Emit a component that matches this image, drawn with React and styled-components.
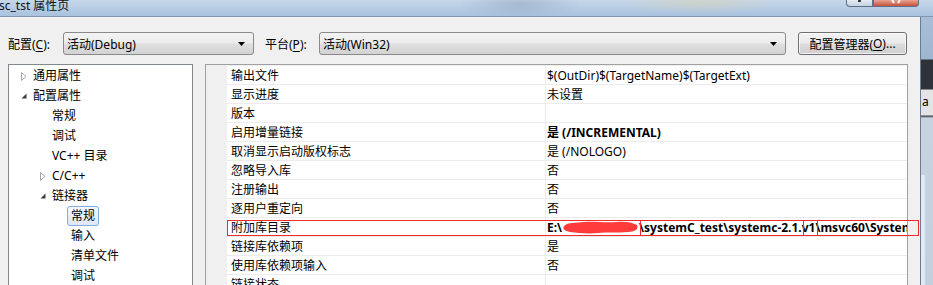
import styled, { createGlobalStyle } from 'styled-components';

const GlobalStyle = createGlobalStyle`
  html, body { margin: 0; padding: 0; background: #f0f0f0; overflow: hidden; }
  body {
    font-family: "Noto Sans", "Noto Sans CJK SC", sans-serif;
    font-size: 12px;
    color: #000;
  }
`;

const Window = styled.div`
  width: 933px;
  height: 285px;
  display: flex;
  flex-direction: column;
  overflow: hidden;
`;

const TitleBar = styled.div`
  height: 16px;
  flex: none;
  display: flex;
  align-items: flex-start;
  border-bottom: 1px solid #8196b0;
  background:
    radial-gradient(ellipse 60px 14px at 520px 4px, rgba(120, 140, 170, 0.35), transparent),
    radial-gradient(ellipse 80px 12px at 700px 2px, rgba(230, 210, 150, 0.35), transparent),
    linear-gradient(to bottom, #c6d7ea, #a9c2de);
`;

const TitleText = styled.div`
  margin-left: -1px;
  line-height: 12px;
  font-size: 12px;
  color: #111;
`;

const Controls = styled.div`
  margin-left: auto;
  margin-right: 14px;
  display: flex;
  height: 7px;
`;

const CtrlButton = styled.div`
  width: ${p => p.$w}px;
  height: 7px;
  box-sizing: border-box;
  border: 1px solid #5f708a;
  border-top: none;
  border-radius: ${p => (p.$close ? '0 0 4px 0' : '0 0 0 4px')};
  background: ${p =>
    p.$close
      ? 'linear-gradient(#e8a493, #c7513a)'
      : 'linear-gradient(#e6edf5, #c4d2e2)'};
  display: flex;
  justify-content: center;
`;

const Main = styled.div`
  flex: 1;
  min-height: 0;
  display: flex;
`;

const Dialog = styled.div`
  width: 921px;
  flex: none;
  box-sizing: border-box;
  padding: 15px 12px 0 8px;
  background: #f0f0f0;
  border-right: 1px solid #6c7b8e;
  display: flex;
  flex-direction: column;
`;

const BackStrip = styled.div`
  flex: 1;
  position: relative;
  background: linear-gradient(
    to bottom,
    #a9bfd8 0px,
    #9fb6d1 42px,
    #2f3339 43px,
    #2f3339 72px,
    #e4e4e4 73px,
    #e4e4e4 98px,
    #3a3f46 99px,
    #c7d3e1 101px,
    #c3cfdd 100%
  );
`;

const StripText = styled.span`
  position: absolute;
  top: 78px;
  left: 1px;
  font-size: 12px;
  line-height: 14px;
`;

const StripBar = styled.div`
  position: absolute;
  top: 158px;
  bottom: 0;
  left: 0;
  width: 4px;
  background: #dfeaf7;
`;

const Toolbar = styled.div`
  display: flex;
  align-items: center;
  height: 23px;
  flex: none;
`;

const Label = styled.span`
  width: ${p => p.$w}px;
  margin-left: ${p => p.$ml || 0}px;
  flex: none;
  white-space: nowrap;
`;

const Key = styled.span`
  text-decoration: underline;
  text-underline-offset: 2px;
`;

const Combo = styled.div`
  width: ${p => p.$w}px;
  height: 23px;
  flex: none;
  box-sizing: border-box;
  border: 1px solid #8a8a8a;
  border-radius: 3px;
  background: linear-gradient(#f3f3f3 0%, #ececec 48%, #dfdfdf 52%, #d3d3d3 100%);
  display: flex;
  align-items: center;
  justify-content: space-between;
  padding: 0 8px 0 3px;
  white-space: nowrap;
`;

const PushButton = styled.div`
  width: 109px;
  height: 23px;
  margin-left: 12px;
  flex: none;
  box-sizing: border-box;
  border: 1px solid #707070;
  border-radius: 3px;
  background: linear-gradient(#f2f2f2 0%, #ebebeb 48%, #dddddd 52%, #cfcfcf 100%);
  box-shadow: inset 0 0 0 1px rgba(255, 255, 255, 0.7);
  display: flex;
  align-items: center;
  justify-content: center;
  white-space: nowrap;
`;

const Panels = styled.div`
  flex: 1;
  min-height: 0;
  margin-top: 9px;
  display: flex;
  gap: 12px;
`;

const Tree = styled.div`
  width: 185px;
  flex: none;
  box-sizing: border-box;
  border: 1px solid #828790;
  border-bottom: none;
  padding-top: 1px;
  background: #fff;
  overflow: hidden;
`;

const TreeRow = styled.div`
  height: 20px;
  display: flex;
  align-items: center;
  padding-left: ${p => 12 + p.$level * 19}px;
  white-space: nowrap;
`;

const ArrowSlot = styled.span`
  width: 12px;
  flex: none;
  display: flex;
  align-items: center;
`;

const TreeLabel = styled.span`
  line-height: 18px;
  ${p =>
    p.$selected &&
    `
    margin-left: -4px;
    padding: 0 3px;
    border: 1px solid #84acdd;
    border-radius: 3px;
    background: linear-gradient(#f3f8fd, #dbe8f7);
  `}
`;

const Grid = styled.div`
  flex: 1;
  position: relative;
  box-sizing: border-box;
  border: 1px solid #a0a0a0;
  border-bottom: none;
  padding-top: 1px;
  background: #f0f0f0;
`;

const GridRow = styled.div`
  display: grid;
  grid-template-columns: 21px 319px 1fr;
  height: 19px;
`;

const Cell = styled.div`
  background: #fff;
  border-bottom: 1px solid #ececec;
  border-right: ${p => (p.$name ? '1px solid #ececec' : 'none')};
  padding-left: ${p => (p.$name ? 4 : 1)}px;
  height: 18px;
  line-height: 19px;
  white-space: nowrap;
  overflow: hidden;
  font-weight: ${p => (p.$bold ? 700 : 400)};
`;

const Mark = styled.div`
  position: absolute;
  left: ${p => p.$x}px;
  top: ${p => p.$y}px;
  width: ${p => p.$w}px;
  height: 16px;
  box-sizing: border-box;
  border: 1px solid #ee2a2a;
  pointer-events: none;
`;

const Blot = styled.svg`
  vertical-align: middle;
  margin-top: -2px;
`;

function Collapsed() {
  return (
    <svg width="6" height="9" viewBox="0 0 6 9">
      <polygon points="0.5,0.5 5,4.5 0.5,8.5" fill="#fff" stroke="#a6a6a6" />
    </svg>
  );
}

function Expanded() {
  return (
    <svg width="6" height="6" viewBox="0 0 6 6">
      <polygon points="5.5,0.5 5.5,5.5 0.5,5.5" fill="#3d3d3d" />
    </svg>
  );
}

function DropArrow() {
  return (
    <svg width="7" height="4" viewBox="0 0 7 4">
      <polygon points="0,0 7,0 3.5,4" fill="#000" />
    </svg>
  );
}

function Redacted() {
  return (
    <Blot width="77" height="15" viewBox="0 0 77 15">
      <path
        d="M2 6 C6 2, 14 3, 22 2 C32 1, 44 3, 54 2 C62 1, 70 2, 75 5 C77 8, 74 12, 66 12 C56 13, 46 12, 36 13 C26 14, 16 13, 8 12 C3 11, 0 9, 2 6 Z"
        fill="#ff3b3b"
      />
    </Blot>
  );
}

const treeItems = [
  { text: '通用属性', level: 0, arrow: 'closed' },
  { text: '配置属性', level: 0, arrow: 'open' },
  { text: '常规', level: 1 },
  { text: '调试', level: 1 },
  { text: 'VC++ 目录', level: 1 },
  { text: 'C/C++', level: 1, arrow: 'closed' },
  { text: '链接器', level: 1, arrow: 'open' },
  { text: '常规', level: 2, selected: true },
  { text: '输入', level: 2 },
  { text: '清单文件', level: 2 },
  { text: '调试', level: 2 },
];

const props = [
  { name: '输出文件', value: '$(OutDir)$(TargetName)$(TargetExt)' },
  { name: '显示进度', value: '未设置' },
  { name: '版本', value: '' },
  { name: '启用增量链接', value: '是 (/INCREMENTAL)', bold: true },
  { name: '取消显示启动版权标志', value: '是 (/NOLOGO)' },
  { name: '忽略导入库', value: '否' },
  { name: '注册输出', value: '否' },
  { name: '逐用户重定向', value: '否' },
  { name: '附加库目录', value: 'path', bold: true },
  { name: '链接库依赖项', value: '是' },
  { name: '使用库依赖项输入', value: '否' },
  { name: '链接状态', value: '' },
];

export default function App() {
  return (
    <>
      <GlobalStyle />
      <Window>
        <TitleBar>
          <TitleText>sc_tst 属性页</TitleText>
          <Controls>
            <CtrlButton $w={27}>
              <svg width="3" height="3"><rect x="0" y="0" width="3" height="2" fill="#3a3a3a" /></svg>
            </CtrlButton>
            <CtrlButton $w={46} $close>
              <svg width="10" height="4" viewBox="0 0 10 4">
                <path d="M1 0 L3 3 M9 0 L7 3" stroke="#fff" strokeWidth="2" />
              </svg>
            </CtrlButton>
          </Controls>
        </TitleBar>

        <Main>
          <Dialog>
            <Toolbar>
              <Label $w={55}>配置(<Key>C</Key>):</Label>
              <Combo $w={191}>
                <span>活动(Debug)</span>
                <DropArrow />
              </Combo>
              <Label $w={54} $ml={11}>平台(<Key>P</Key>):</Label>
              <Combo $w={467}>
                <span>活动(Win32)</span>
                <DropArrow />
              </Combo>
              <PushButton>配置管理器(<Key>O</Key>)...</PushButton>
            </Toolbar>

            <Panels>
              <Tree>
                {treeItems.map((item, i) => (
                  <TreeRow key={i} $level={item.level}>
                    <ArrowSlot>
                      {item.arrow === 'closed' && <Collapsed />}
                      {item.arrow === 'open' && <Expanded />}
                    </ArrowSlot>
                    <TreeLabel $selected={item.selected}>{item.text}</TreeLabel>
                  </TreeRow>
                ))}
              </Tree>

              <Grid>
                {props.map((p, i) => (
                  <GridRow key={i}>
                    <div />
                    <Cell $name>{p.name}</Cell>
                    <Cell $bold={p.bold}>
                      {p.value === 'path' ? (
                        <>
                          E:\<Redacted />\systemC_test\systemc-2.1.v1\msvc60\SystemC\Debug
                        </>
                      ) : (
                        p.value
                      )}
                    </Cell>
                  </GridRow>
                ))}
                <Mark $x={21} $y={155} $w={692} />
                <Mark $x={434} $y={155} $w={178} />
                <Mark $x={597} $y={155} $w={116} />
              </Grid>
            </Panels>
          </Dialog>
          <BackStrip>
            <StripText>a</StripText>
            <StripBar />
          </BackStrip>
        </Main>
      </Window>
    </>
  );
}
